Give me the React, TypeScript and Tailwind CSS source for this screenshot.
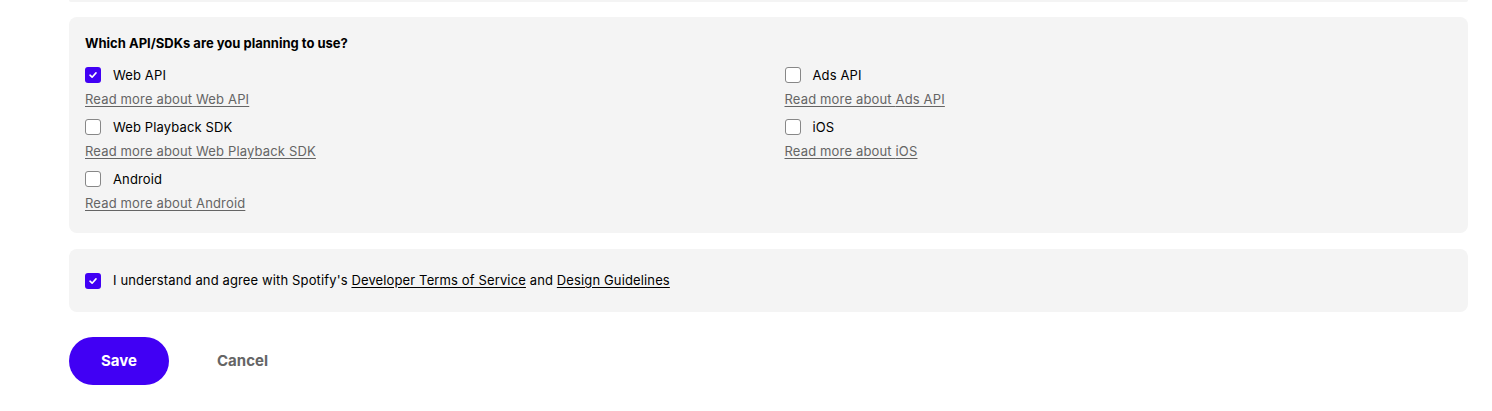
import React from "react";

const APIS = [
  { name: "Web API", checked: true },
  { name: "Ads API", checked: false },
  { name: "Web Playback SDK", checked: false },
  { name: "iOS", checked: false },
  { name: "Android", checked: false },
];

function Box({ checked }: { checked: boolean }) {
  if (checked) {
    return (
      <span className="flex h-4 w-4 shrink-0 items-center justify-center rounded-[3px] bg-[#4100f4]">
        <svg width="10" height="10" viewBox="0 0 10 10" fill="none">
          <path
            d="M2 5.2 4.1 7.2 8 2.9"
            stroke="white"
            strokeWidth="1.6"
            strokeLinecap="round"
            strokeLinejoin="round"
          />
        </svg>
      </span>
    );
  }
  return (
    <span className="h-4 w-4 shrink-0 rounded-[3px] border border-[#878787] bg-white" />
  );
}

export default function App() {
  return (
    <div className="min-h-[411px] bg-white font-['Inter',sans-serif] text-black">
      <div className="ml-[69px] mr-6">
        <div className="h-[2px] rounded-b-md bg-[#f4f4f4]" />

        <section className="mt-[15px] rounded-lg bg-[#f4f4f4] px-4 pb-[14px] pt-4">
          <h2 className="text-[13px] font-bold leading-5">
            Which API/SDKs are you planning to use?
          </h2>
          <div className="mt-[10px] grid grid-cols-2 gap-x-8">
            {APIS.map((api) => (
              <div key={api.name} className="flex flex-col gap-[2px] pb-[6px]">
                <label className="flex h-6 items-center gap-3 text-[13px] leading-5 tracking-[0.01em]">
                  <Box checked={api.checked} />
                  {api.name}
                </label>
                <a
                  href="#"
                  className="self-start text-[13px] leading-5 tracking-[0.012em] text-[#656565] underline underline-offset-2"
                >
                  Read more about {api.name}
                </a>
              </div>
            ))}
          </div>
        </section>

        <section className="mt-4 flex h-[63px] items-center gap-3 rounded-lg bg-[#f4f4f4] px-4 text-[13px] tracking-[0.01em]">
          <Box checked />
          <p>
            I understand and agree with Spotify's{" "}
            <a href="#" className="underline underline-offset-2">
              Developer Terms of Service
            </a>{" "}
            and{" "}
            <a href="#" className="underline underline-offset-2">
              Design Guidelines
            </a>
          </p>
        </section>

        <div className="mt-[25px] flex items-center gap-12">
          <button className="h-12 w-[100px] rounded-full bg-[#4100f4] text-[15px] font-bold text-white">
            Save
          </button>
          <button className="text-[15px] font-bold text-[#656565]">Cancel</button>
        </div>
      </div>
    </div>
  );
}
